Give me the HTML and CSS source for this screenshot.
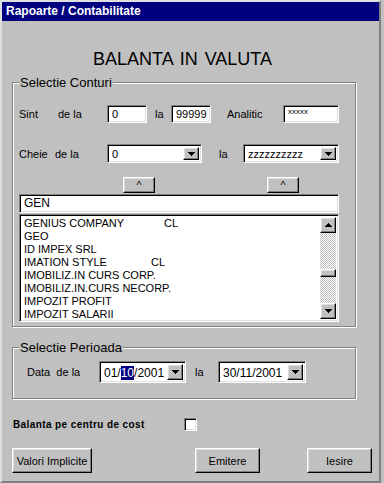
FILE: index.html
```html
<!DOCTYPE html>
<html lang="ro">
<head>
    <meta charset="UTF-8">
    <meta name="viewport" content="width=device-width, initial-scale=1.0">
    <title>Rapoarte / Contabilitate</title>
    <link rel="stylesheet" href="styles.css">
</head>
<body>
<div class="window">
    <div class="titlebar">Rapoarte / Contabilitate</div>

    <h1 class="heading">BALANTA IN VALUTA</h1>

    <fieldset class="group conturi">
        <legend>Selectie Conturi</legend>

        <div class="row row-sint">
            <span class="lbl l-sint">Sint</span>
            <span class="lbl l-dela">de la</span>
            <div class="field f-cont">0</div>
            <span class="lbl l-la">la</span>
            <div class="field f-cont">99999</div>
            <span class="lbl l-analitic">Analitic</span>
            <div class="field f-analitic"><span class="tiny">xxxxx</span></div>
        </div>

        <div class="row row-cheie">
            <span class="lbl l-cheie">Cheie</span>
            <span class="lbl l-dela2">de la</span>
            <div class="field combo c-cheie">
                <span class="val">0</span>
                <span class="drop raised">
                    <svg width="7" height="4" viewBox="0 0 7 4"><path d="M0 0h7v1H0zM1 1h5v1H1zM2 2h3v1H2zM3 3h1v1H3z"/></svg>
                </span>
            </div>
            <span class="lbl l-la2">la</span>
            <div class="field combo c-cheie2">
                <span class="val">zzzzzzzzzz</span>
                <span class="drop raised">
                    <svg width="7" height="4" viewBox="0 0 7 4"><path d="M0 0h7v1H0zM1 1h5v1H1zM2 2h3v1H2zM3 3h1v1H3z"/></svg>
                </span>
            </div>
        </div>

        <div class="row row-up">
            <button class="raised caret caret-1">^</button>
            <button class="raised caret caret-2">^</button>
        </div>

        <div class="field search">GEN</div>

        <div class="field listbox">
            <ul class="items">
                <li><span class="name n-genius">GENIUS COMPANY</span>CL</li>
                <li>GEO</li>
                <li>ID IMPEX SRL</li>
                <li><span class="name n-imation">IMATION STYLE</span>CL</li>
                <li>IMOBILIZ.IN CURS CORP.</li>
                <li>IMOBILIZ.IN.CURS NECORP.</li>
                <li>IMPOZIT PROFIT</li>
                <li>IMPOZIT SALARII</li>
            </ul>
            <div class="scrollbar">
                <span class="sb-btn raised">
                    <svg width="7" height="4" viewBox="0 0 7 4"><path d="M3 0h1v1H3zM2 1h3v1H2zM1 2h5v1H1zM0 3h7v1H0z"/></svg>
                </span>
                <span class="track"><span class="thumb raised"></span></span>
                <span class="sb-btn raised">
                    <svg width="7" height="4" viewBox="0 0 7 4"><path d="M0 0h7v1H0zM1 1h5v1H1zM2 2h3v1H2zM3 3h1v1H3z"/></svg>
                </span>
            </div>
        </div>
    </fieldset>

    <fieldset class="group perioada">
        <legend>Selectie Perioada</legend>
        <div class="row row-data">
            <span class="lbl l-data">Data&nbsp; de la</span>
            <div class="field combo c-data">
                <span class="val">01/<span class="sel">10</span>/2001</span>
                <span class="drop raised">
                    <svg width="7" height="4" viewBox="0 0 7 4"><path d="M0 0h7v1H0zM1 1h5v1H1zM2 2h3v1H2zM3 3h1v1H3z"/></svg>
                </span>
            </div>
            <span class="lbl l-la3">la</span>
            <div class="field combo c-data2">
                <span class="val">30/11/2001</span>
                <span class="drop raised">
                    <svg width="7" height="4" viewBox="0 0 7 4"><path d="M0 0h7v1H0zM1 1h5v1H1zM2 2h3v1H2zM3 3h1v1H3z"/></svg>
                </span>
            </div>
        </div>
    </fieldset>

    <div class="row row-check">
        <span class="check-lbl">Balanta pe centru de cost</span>
        <span class="field checkbox"></span>
    </div>

    <div class="row row-buttons">
        <button class="raised push b-valori">Valori Implicite</button>
        <button class="raised push b-emitere">Emitere</button>
        <button class="raised push b-iesire">Iesire</button>
    </div>
</div>
</body>
</html>
```

FILE: styles.css
```css
* { box-sizing: border-box; }
body {
    margin: 0;
    background: #c0c0c0;
    font-family: "Liberation Sans", Arial, sans-serif;
    font-size: 11px;
    color: #000;
}
.window {
    width: 381px;
    height: 483px;
    border: 2px solid;
    border-color: #dfdfdf #808080 #808080 #dfdfdf;
    background: #c0c0c0;
}
.titlebar { height: 19px; background: #000080; color: #fff; font-weight: bold; font-size: 12px; line-height: 19px; padding-left: 4px; }
.heading { margin: 28px 0 0; padding-right: 16px; font-size: 18px; font-weight: normal; line-height: 20px; text-align: center; word-spacing: 2px; }

/* group boxes */
.group { width: 344px; margin: 6px 0 0 10px; border: 1px solid #808080; box-shadow: inset 1px 1px #fff, 1px 1px #fff; min-inline-size: 0; }
.group legend { font-size: 13px; line-height: 15px; padding: 0 1px; background: #c0c0c0; }
.conturi { padding: 15px 16px 4px 6px; }
.perioada { margin-top: 13px; padding: 6px 16px 15px 6px; }

.row { display: flex; align-items: center; }
.lbl { flex: none; white-space: nowrap; }

/* win98 bevels */
.raised { background: #c0c0c0; border: 1px solid; border-color: #fff #000 #000 #fff; box-shadow: inset -1px -1px #808080, inset 1px 1px #dfdfdf; }
.field { flex: none; background: #fff; border: 1px solid; border-color: #808080 #fff #fff #808080; box-shadow: inset 1px 1px #000, inset -1px -1px #dfdfdf; }

/* row: sint */
.row-sint { height: 18px; }
.row-sint .field { height: 18px; line-height: 16px; padding-left: 4px; }
.l-sint { width: 39px; }
.l-dela { width: 49px; }
.f-cont { width: 40px; }
.l-la { width: 16px; margin-left: 8px; }
.l-analitic { width: 56px; margin-left: 16px; }
.f-analitic { width: 56px; }
.tiny { font-size: 8px; vertical-align: top; line-height: 12px; }

/* row: cheie */
.row-cheie { margin-top: 21px; height: 19px; }
.l-cheie { width: 36px; }
.l-dela2 { width: 52px; }
.l-la2 { width: 24px; margin-left: 17px; }
.combo { display: flex; height: 19px; padding: 2px; }
.combo .val { flex: 1; padding-left: 2px; line-height: 15px; white-space: nowrap; overflow: hidden; }
.combo .drop { width: 16px; flex: none; display: flex; align-items: center; justify-content: center; }
.c-cheie { width: 95px; }
.c-cheie2 { width: 96px; }

/* caret buttons */
.row-up { margin-top: 14px; height: 16px; }
.caret { width: 32px; height: 16px; padding: 0; font: 11px/10px "Liberation Sans", Arial, sans-serif; }
.caret-1 { margin-left: 104px; }
.caret-2 { margin-left: 112px; }

.search { margin-top: 1px; width: 320px; height: 19px; line-height: 17px; padding-left: 4px; font-size: 12px; }

/* list */
.listbox { margin-top: 1px; width: 320px; height: 108px; padding: 2px; display: flex; }
.items { flex: 1; margin: 0; padding: 0 0 0 2px; list-style: none; overflow: hidden; }
.items li { line-height: 13px; white-space: nowrap; }
.name { display: inline-block; }
.n-genius { width: 140px; }
.n-imation { width: 127px; }
.scrollbar { width: 16px; flex: none; display: flex; flex-direction: column; }
.sb-btn { height: 16px; flex: none; display: flex; align-items: center; justify-content: center; }
.track { flex: 1; background: repeating-conic-gradient(#c0c0c0 0 25%, #fff 0 50%) 0 0 / 2px 2px; }
.thumb { display: block; height: 8px; margin-top: 36px; }

/* period */
.row-data { height: 22px; }
.l-data { width: 72px; margin-left: 8px; }
.c-data { width: 87px; height: 22px; }
.c-data2 { width: 88px; height: 22px; }
.row-data .val { line-height: 18px; font-size: 12px; }
.sel { background: #000080; color: #fff; }
.l-la3 { width: 23px; margin-left: 9px; }

/* checkbox */
.row-check { margin-top: 19px; height: 13px; }
.check-lbl { width: 171px; margin-left: 11px; font-size: 10px; font-weight: bold; letter-spacing: 0.4px; }
.checkbox { width: 13px; height: 13px; }

/* push buttons */
.row-buttons { margin-top: 17px; }
.push { height: 25px; padding: 0; font: 11px "Liberation Sans", Arial, sans-serif; color: #000; }
.b-valori { width: 80px; margin-left: 10px; }
.b-emitere { width: 65px; margin-left: 103px; }
.b-iesire { width: 65px; margin-left: 47px; }
```
